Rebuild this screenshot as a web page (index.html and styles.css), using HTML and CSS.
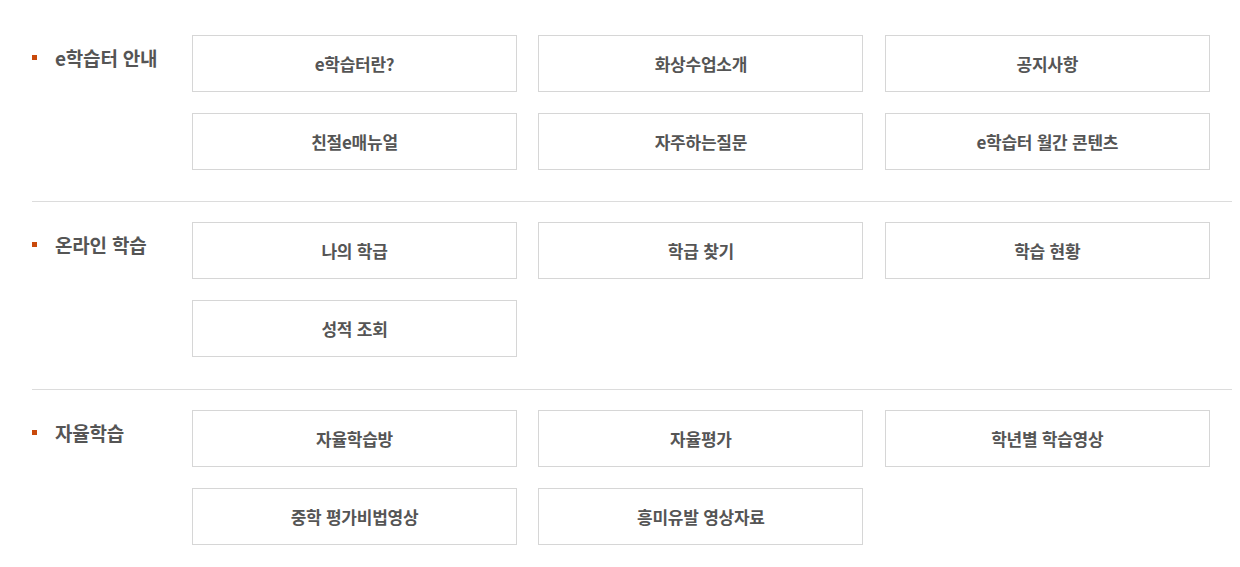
FILE: index.html
```html
<!DOCTYPE html>
<html lang="ko">
<head>
<meta charset="utf-8">
<link rel="stylesheet" href="styles.css">
</head>
<body>
<div class="sitemap">
  <section class="group">
    <h2 class="group-title">e학습터 안내</h2>
    <ul class="links">
      <li><a href="#">e학습터란?</a></li>
      <li><a href="#">화상수업소개</a></li>
      <li><a href="#">공지사항</a></li>
      <li><a href="#">친절e매뉴얼</a></li>
      <li><a href="#">자주하는질문</a></li>
      <li><a href="#">e학습터 월간 콘텐츠</a></li>
    </ul>
  </section>
  <section class="group">
    <h2 class="group-title">온라인 학습</h2>
    <ul class="links">
      <li><a href="#">나의 학급</a></li>
      <li><a href="#">학급 찾기</a></li>
      <li><a href="#">학습 현황</a></li>
      <li><a href="#">성적 조회</a></li>
    </ul>
  </section>
  <section class="group">
    <h2 class="group-title">자율학습</h2>
    <ul class="links">
      <li><a href="#">자율학습방</a></li>
      <li><a href="#">자율평가</a></li>
      <li><a href="#">학년별 학습영상</a></li>
      <li><a href="#">중학 평가비법영상</a></li>
      <li><a href="#">흥미유발 영상자료</a></li>
    </ul>
  </section>
</div>
</body>
</html>
```
FILE: styles.css
```css
* { box-sizing: border-box; }
html, body { margin: 0; padding: 0; background: #fff; }
body {
  font-family: "Noto Sans CJK KR", "Noto Sans", sans-serif;
  color: #555;
}
.sitemap {
  width: 1200px;
  margin-left: 32px;
  padding-top: 15px;
}
.group {
  display: flex;
  padding: 20px 0 31.5px;
}
.group:first-child {
  padding-bottom: 31px;
}
.group + .group {
  border-top: 1px solid #dcdcdc;
}
.group-title {
  width: 160px;
  flex: none;
  margin: 0;
  padding: 12px 0 0 23px;
  position: relative;
  font-size: 19px;
  font-weight: 700;
  line-height: 22px;
  letter-spacing: -0.2px;
  color: #555;
}
.group-title::before {
  content: "";
  position: absolute;
  left: 0;
  top: 20px;
  width: 5px;
  height: 5px;
  background: #c9490b;
}
.links {
  list-style: none;
  margin: 0;
  padding: 0;
  width: 1018px;
  display: grid;
  grid-template-columns: repeat(3, 325px);
  column-gap: 21.4px;
  row-gap: 21px;
}
.links a {
  display: flex;
  align-items: center;
  justify-content: center;
  height: 57px;
  border: 1px solid #d6d6d6;
  text-decoration: none;
  font-size: 17px;
  font-weight: 700;
  letter-spacing: -0.25px;
  color: #555;
}
```
